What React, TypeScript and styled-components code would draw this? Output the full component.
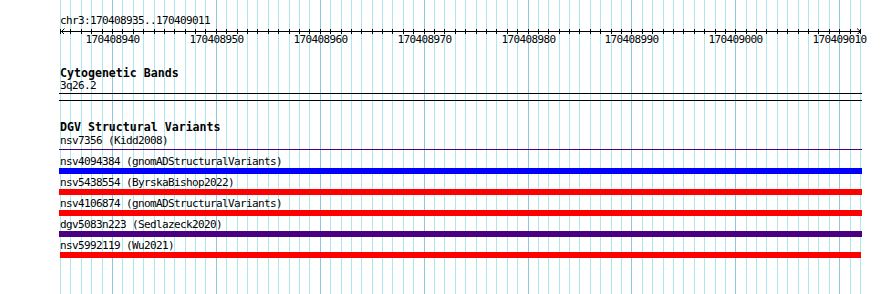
import React from "react";
import styled, { createGlobalStyle } from "styled-components";

const START = 170408935;
const END = 170409011;
const VIEW_LEFT = 60;
const VIEW_WIDTH = 800;
const BASES = END - START + 1;
const PX_PER_BASE = VIEW_WIDTH / BASES;

const xOf = (i: number) => Math.round(VIEW_LEFT + i * PX_PER_BASE);

const positions = Array.from({ length: BASES + 1 }, (_, i) => ({
  x: xOf(i),
  base: START + i,
  major: (START + i) % 10 === 0,
}));

const features = [
  { name: "nsv7356", source: "Kidd2008", color: "#4b0082", thin: true },
  { name: "nsv4094384", source: "gnomADStructuralVariants", color: "#0000ff" },
  { name: "nsv5438554", source: "ByrskaBishop2022", color: "#ff0000" },
  { name: "nsv4106874", source: "gnomADStructuralVariants", color: "#ff0000" },
  { name: "dgv5083n223", source: "Sedlazeck2020", color: "#4b0082" },
  { name: "nsv5992119", source: "Wu2021", color: "#ff0000", inset: true },
];

const GlobalStyle = createGlobalStyle`
  html, body {
    margin: 0;
    padding: 0;
    background: #ffffff;
  }
  body {
    font-family: "DejaVu Sans Mono", "Liberation Mono", monospace;
    color: #000000;
  }
`;

// small mono text, 6px per character
const monoText = `
  font-size: 11px;
  letter-spacing: -0.62px;
  line-height: 12px;
  white-space: pre;
`;

const Page = styled.div`
  position: relative;
  width: 890px;
  height: 294px;
  overflow: hidden;
  background: #ffffff;
`;

const GridLayer = styled.svg`
  position: absolute;
  top: 0;
  left: 0;
  z-index: 0;
`;

const Content = styled.div`
  position: relative;
  z-index: 1;
  display: flex;
  flex-direction: column;
  padding-top: 15px;
`;

const LocationLabel = styled.div`
  ${monoText}
  padding-left: 60px;
`;

const RulerSvg = styled.svg`
  display: block;
`;

const RulerLabels = styled.div`
  ${monoText}
  position: relative;
  height: 12px;
`;

const RulerLabel = styled.span`
  position: absolute;
  top: 0;
  transform: translateX(-50%);
`;

const Track = styled.section<{ $gap: number }>`
  display: flex;
  flex-direction: column;
  width: 803px;
  margin-left: 59px;
  margin-top: ${({ $gap }) => $gap}px;
`;

const TrackTitle = styled.div`
  font-size: 11.6px;
  font-weight: bold;
  line-height: 14px;
  padding-left: 1px;
  white-space: pre;
`;

const BandLabel = styled.div`
  ${monoText}
  padding-left: 1px;
`;

const Divider = styled.div<{ $space: number }>`
  height: 1px;
  background: #000000;
  margin-top: ${({ $space }) => $space}px;
`;

const FeatureList = styled.div`
  display: flex;
  flex-direction: column;
  padding-top: 1px;
`;

const FeatureRow = styled.div`
  display: flex;
  flex-direction: column;
  margin-bottom: 3px;
`;

const FeatureLabel = styled.div`
  ${monoText}
  padding-left: 1px;
`;

const FeatureBar = styled.div<{ $color: string; $thin?: boolean; $inset?: boolean }>`
  height: 6px;
  display: flex;
  align-items: flex-start;
  padding: 0 ${({ $inset }) => ($inset ? "1px" : "0")};

  &::before {
    content: "";
    flex: 1;
    height: ${({ $thin }) => ($thin ? "1px" : "6px")};
    margin-top: ${({ $thin }) => ($thin ? "2px" : "0")};
    background: ${({ $color }) => $color};
  }
`;

const Grid = () => (
  <GridLayer width={890} height={294} shapeRendering="crispEdges">
    {positions.map((p) => (
      <line
        key={p.base}
        x1={p.x + 0.5}
        x2={p.x + 0.5}
        y1={0}
        y2={294}
        stroke={p.major ? "#8cc8e6" : "#ace8ee"}
        strokeWidth={1}
      />
    ))}
  </GridLayer>
);

const Ruler = () => {
  const left = VIEW_LEFT + 1;
  const right = VIEW_LEFT + VIEW_WIDTH + 1;
  return (
    <>
      <RulerSvg width={890} height={7} shapeRendering="crispEdges">
        <line x1={left} x2={right} y1={4.5} y2={4.5} stroke="#000" />
        {positions.map((p) => (
          <line
            key={p.base}
            x1={p.x + 0.5}
            x2={p.x + 0.5}
            y1={2}
            y2={7}
            stroke="#000"
          />
        ))}
        <polyline
          points={`${left + 3.5},1.5 ${left + 0.5},4.5 ${left + 3.5},7.5`}
          fill="none"
          stroke="#000"
          shapeRendering="auto"
        />
        <polyline
          points={`${right - 4},1.5 ${right - 0.5},4.5 ${right - 4},7.5`}
          fill="none"
          stroke="#000"
          shapeRendering="auto"
        />
      </RulerSvg>
      <RulerLabels>
        {positions
          .filter((p) => p.major)
          .map((p) => (
            <RulerLabel key={p.base} style={{ left: p.x + 0.5 }}>
              {p.base}
            </RulerLabel>
          ))}
      </RulerLabels>
    </>
  );
};

export default function App() {
  return (
    <Page>
      <GlobalStyle />
      <Grid />
      <Content>
        <LocationLabel>
          chr3:{START}..{END}
        </LocationLabel>
        <Ruler />

        <Track $gap={20}>
          <TrackTitle>Cytogenetic Bands</TrackTitle>
          <BandLabel>3q26.2</BandLabel>
          <Divider $space={1} />
          <Divider $space={6} />
        </Track>

        <Track $gap={19}>
          <TrackTitle>DGV Structural Variants</TrackTitle>
          <FeatureList>
            {features.map((f) => (
              <FeatureRow key={f.name}>
                <FeatureLabel>
                  {f.name} ({f.source})
                </FeatureLabel>
                <FeatureBar $color={f.color} $thin={f.thin} $inset={f.inset} />
              </FeatureRow>
            ))}
          </FeatureList>
        </Track>
      </Content>
    </Page>
  );
}
